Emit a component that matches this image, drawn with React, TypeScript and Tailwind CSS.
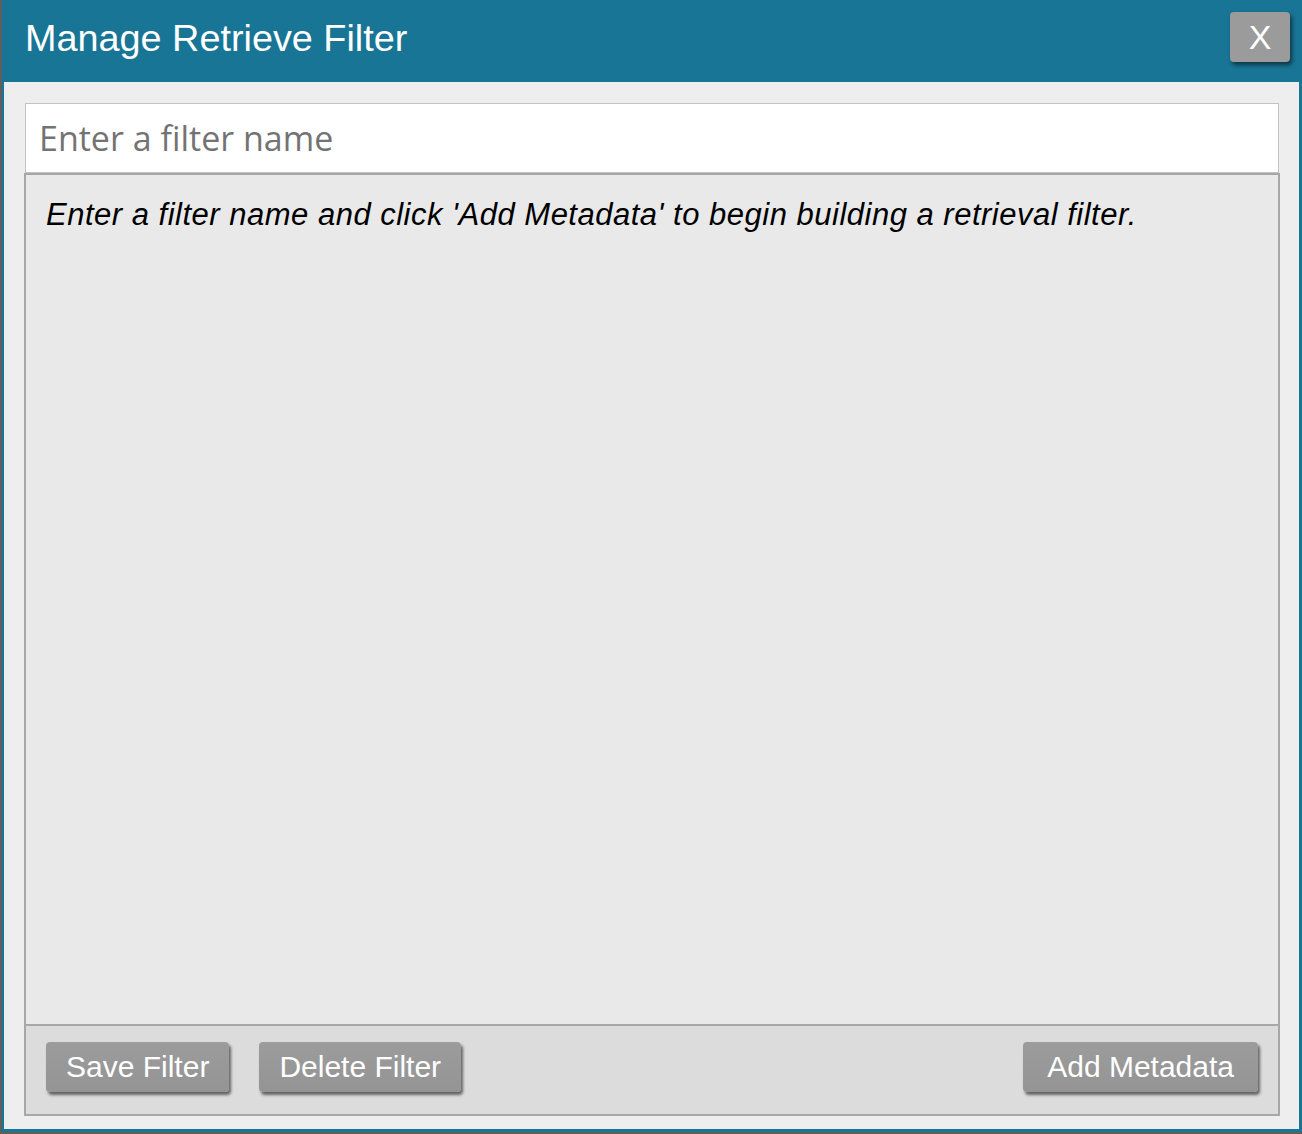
import React from "react";

const font = { fontFamily: '"Liberation Sans", Arial, Helvetica, sans-serif' };

function Btn({ children, wide }: { children: React.ReactNode; wide?: boolean }) {
  return (
    <button
      className={
        wide
          ? "h-[50px] rounded-[4px] bg-gradient-to-b from-[#9c9c9c] to-[#949494] px-[24px] text-[30px] leading-none text-white shadow-[2px_3px_3px_rgba(0,0,0,0.55)]"
          : "h-[50px] rounded-[4px] bg-gradient-to-b from-[#9c9c9c] to-[#949494] px-[20px] text-[30px] leading-none text-white shadow-[2px_3px_3px_rgba(0,0,0,0.55)]"
      }
      style={font}
    >
      {children}
    </button>
  );
}

export default function App() {
  return (
    <div className="flex h-[1134px] w-[1302px] bg-[#5e5e5e] pl-[2px]" style={font}>
      <div className="flex h-[1132px] w-[1300px] flex-col border-b-[3px] border-l-2 border-r-[3px] border-[#187595] bg-[#eeeeee]">
        <div className="flex h-[82px] shrink-0 items-center justify-between bg-[#187595] pl-[21px] pr-[9px]">
          <div className="text-[37.8px] leading-none text-white -mt-[4px]">Manage Retrieve Filter</div>
          <button className="-mt-[8px] flex h-[50px] w-[60px] items-center justify-center rounded-[4px] bg-[#9b9b9b] text-[34px] leading-none text-white shadow-[2px_3px_4px_rgba(0,0,0,0.55)]">
            X
          </button>
        </div>
        <div className="flex flex-1 flex-col pb-[13px] pl-[20px] pr-[19px] pt-[21px]">
          <div className="mx-[1px] flex h-[70px] shrink-0 items-center border border-[#c2c2c2] bg-white pl-[13px]">
            <span className="text-[34px] leading-none text-[#737373] -mt-[1px]" style={{ fontFamily: '"Open Sans", sans-serif' }}>
              Enter a filter name
            </span>
          </div>
          <div className="flex flex-1 flex-col border-2 border-[#a7a7a7] bg-[#e9e9e9]">
            <div className="flex-1 pl-[20px] pt-[24px]">
              <p className="text-[31px] italic leading-none tracking-[0.5px] text-black">
                Enter a filter name and click 'Add Metadata' to begin building a retrieval filter.
              </p>
            </div>
            <div className="flex h-[90px] shrink-0 items-start justify-between border-t-2 border-[#a7a7a7] bg-[#dcdcdc] px-[20px] pt-[16px]">
              <div className="flex gap-[30px]">
                <Btn>Save Filter</Btn>
                <Btn>Delete Filter</Btn>
              </div>
              <Btn wide>Add Metadata</Btn>
            </div>
          </div>
        </div>
      </div>
    </div>
  );
}
